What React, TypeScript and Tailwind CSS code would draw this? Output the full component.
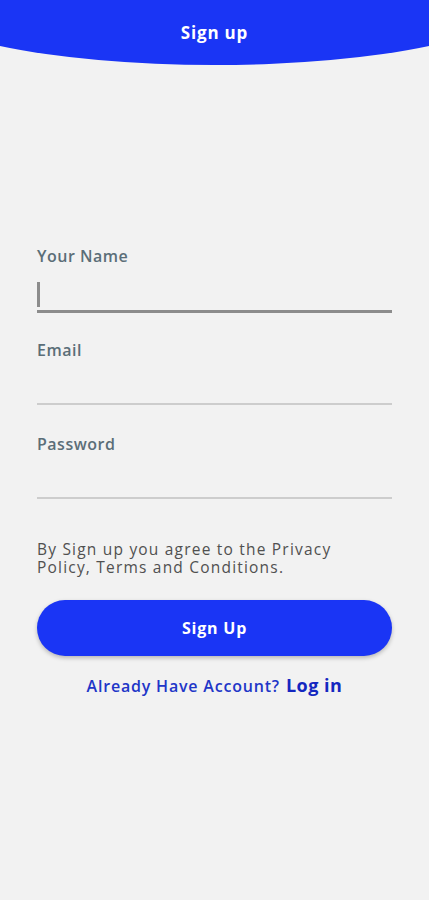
import React from "react";

export default function App() {
  return (
    <div
      className="min-h-[900px] w-full bg-[#f2f2f2] overflow-hidden flex flex-col"
      style={{ fontFamily: '"Open Sans", "Noto Sans", sans-serif' }}
    >
      <div className="-mx-[89px] h-[65px] rounded-b-[304px_65px] bg-[#1a35f5] flex items-center justify-center">
        <span className="text-white text-[17px] font-bold tracking-[0.8px]">Sign up</span>
      </div>

      <div className="px-[37px] pt-[180px] flex flex-col">
        <label className="text-[16px] font-semibold text-[#5b6e78] leading-[22px] tracking-[0.5px]">Your Name</label>
        <div className="mt-[10px] h-[36px] border-b-[3px] border-[#8c8c8c] flex items-start">
          <div className="mt-[5px] w-[3px] h-[25px] bg-[#8c8c8c]" />
        </div>

        <label className="mt-[26px] text-[16px] font-semibold text-[#5b6e78] leading-[22px] tracking-[0.5px]">Email</label>
        <div className="mt-[10px] h-[34px] border-b-2 border-[#cdcdcd]" />

        <label className="mt-[28px] text-[16px] font-semibold text-[#5b6e78] leading-[22px] tracking-[0.5px]">Password</label>
        <div className="mt-[10px] h-[34px] border-b-2 border-[#cdcdcd]" />

        <p className="mt-[41px] text-[15.5px] leading-[18px] text-[#505050] tracking-[1.2px]">
          By Sign up you agree to the Privacy
          <br />
          Policy, Terms and Conditions.
        </p>

        <button className="mt-[24px] h-[56px] w-full rounded-full bg-[#1a35f5] text-white text-[16px] font-bold tracking-[0.8px] shadow-[0_2px_4px_rgba(0,0,0,0.25)]">
          Sign Up
        </button>

        <div className="mt-[16px] flex items-baseline justify-center gap-[6px]">
          <span className="text-[16px] font-semibold text-[#2136c8] tracking-[0.8px]">Already Have Account?</span>
          <span className="text-[18px] font-bold text-[#1427c0] tracking-[0.5px]">Log in</span>
        </div>
      </div>
    </div>
  );
}
